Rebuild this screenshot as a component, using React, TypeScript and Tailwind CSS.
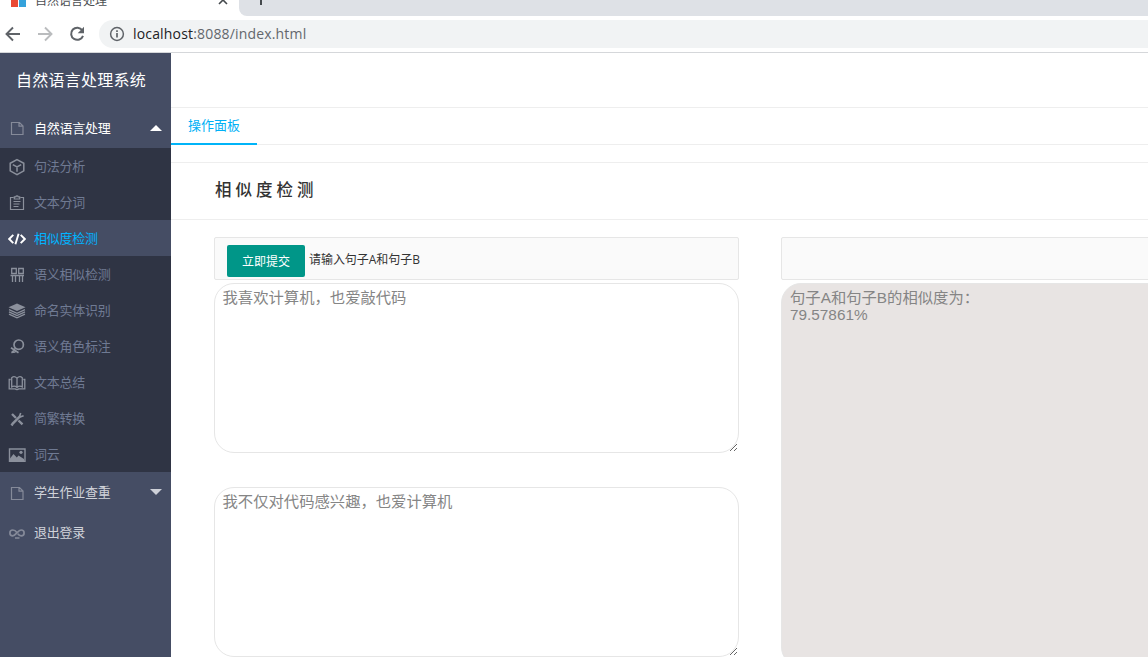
import type { ReactNode } from 'react'

type IconProps = { children: ReactNode; className?: string }

function Icon({ children, className = '' }: IconProps) {
  return (
    <svg
      viewBox="0 0 18 18"
      fill="none"
      stroke="currentColor"
      strokeWidth="1.3"
      className={`h-[18px] w-[18px] shrink-0 ${className}`}
    >
      {children}
    </svg>
  )
}

const fileIcon = (
  <path d="M3.500 3.500h8l3.500 3.500v8.500H3.500zM11 3.500v3.700h3.500" strokeWidth="1.2" />
)

const menuItems = [
  {
    label: '句法分析',
    icon: <path d="M9 1.600l6.800 3.700v7.600L9 16.600l-6.800-3.700V5.300zM4.800 6.600L9 9l4.200-2.400M9 9v4.800" strokeWidth="1.500" />,
  },
  {
    label: '文本分词',
    icon: (
      <g strokeWidth="1.2">
        <path d="M5.500 3.500h-3v12h13v-12h-3M6.300 5V2.800h1.500C8 1.500 10 1.500 10.200 2.800h1.500V5z" />
        <path d="M5.500 7.500h7M5.500 10h6M5.500 12.500h5" />
      </g>
    ),
  },
  {
    label: '相似度检测',
    active: true,
    icon: <path d="M5.300 4.800L1.200 9l4.100 4.200M12.700 4.800L16.800 9l-4.100 4.200M10.600 3.800L7.400 14.200" strokeWidth="1.900" />,
  },
  {
    label: '语义相似检测',
    icon: (
      <g strokeWidth="1.3">
        <path d="M3.700 2.500h4.600v5H3.700zM10.700 2.500h4.600v5h-4.600z" />
        <path d="M2.500 9.500h13.500M4.500 9.500V16M7.500 9.500V16M11.500 9.500V16M14.500 9.500V16" />
      </g>
    ),
  },
  {
    label: '命名实体识别',
    icon: (
      <>
        <path d="M9 1.500l8.500 3.700L9 8.900.5 5.200z" fill="currentColor" stroke="none" />
        <path d="M1 7.600l8 3.700 8-3.700M1 9.900l8 3.700 8-3.700M1 12.200l8 3.700 8-3.700" />
      </>
    ),
  },
  {
    label: '语义角色标注',
    icon: (
      <>
        <circle cx="10.700" cy="6.700" r="4.700" strokeWidth="1.700" />
        <path d="M7.500 10.200L4 14.500M3 9.700l3 2 4.500 3M3.300 14.300l4.200-.3" strokeWidth="1.700" />
      </>
    ),
  },
  {
    label: '文本总结',
    icon: (
      <path d="M9 4.300C7.300 2.400 5.200 2.400 3.700 3.700v9.200c2-1.200 3.800-.8 5.300.5 1.500-1.300 3.300-1.700 5.300-.5V3.700C12.800 2.400 10.700 2.400 9 4.300zM9 4.300v9M2.700 5.500H1.200v9.300h6.100c.7.900 2.700.9 3.400 0h6.100V5.500h-1.500" strokeWidth="1.300" />
    ),
  },
  {
    label: '简繁转换',
    icon: (
      <>
        <path d="M4 4l4 4M10.500 10.500l4 3.800" strokeWidth="2.400" />
        <path d="M4.200 14.200l8-8" strokeWidth="2.500" />
        <path d="M12.700 2.900l-1 2.900 1 1 2.900-1M3 14l2 1.500" strokeWidth="1.600" />
      </>
    ),
  },
  {
    label: '词云',
    icon: (
      <>
        <path d="M1.500 3h15.500v12.200H1.500z" strokeWidth="1.400" />
        <path d="M2 15v-2.500l3.500-4.500 3.300 3.500 1.700-2 5.500 3.500v2z" fill="currentColor" stroke="none" />
        <circle cx="13" cy="6.300" r="1.600" fill="currentColor" stroke="none" />
      </>
    ),
  },
]

function BrowserBar() {
  return (
    <header className="h-[53px] shrink-0 border-b border-[#d5d7da] bg-white">
      <div className="flex h-4 overflow-hidden">
        <div className="flex w-[239px] shrink-0 items-start">
          <div className="ml-[11px] flex h-[7px] shrink-0 gap-px">
            <span className="w-[7px] bg-[#ea4a35]" />
            <span className="w-[7px] bg-[#35a2db]" />
          </div>
          <span className="-mt-[9px] ml-[9px] whitespace-nowrap text-xs leading-[18px] text-[#4b4e52]">自然语言处理</span>
          <svg viewBox="0 0 10 10" className="-mt-[5px] ml-auto mr-[11px] h-[10px] w-[10px]" stroke="#45494d" strokeWidth="1.6">
            <path d="M1 1l8 8M9 1L1 9" />
          </svg>
        </div>
        <div className="flex-1 rounded-bl-lg bg-[#dee1e6]">
          <div className="ml-[21px] h-[5px] w-[2px] bg-[#45494d]" />
        </div>
      </div>
      <div className="flex h-9 items-center">
        <svg viewBox="0 0 16 16" className="ml-[5px] h-4 w-4" fill="none" stroke="#5f6368" strokeWidth="1.9">
          <path d="M15 8H2M8 1.500L1.500 8 8 14.500" />
        </svg>
        <svg viewBox="0 0 16 16" className="ml-4 h-4 w-4" fill="none" stroke="#babcbe" strokeWidth="1.9">
          <path d="M1 8h13M8 1.500L14.500 8 8 14.500" />
        </svg>
        <svg viewBox="0 0 16 16" className="ml-4 h-4 w-4" fill="none" stroke="#5f6368" strokeWidth="2">
          <path d="M13.300 4.300A6.100 6.100 0 1 0 14 9.800" />
          <path d="M15 .8v6.500H8.700z" fill="#5f6368" stroke="none" />
        </svg>
        <div className="ml-[14px] flex h-7 flex-1 items-center rounded-l-full bg-[#f1f3f4] pl-[10px]">
          <svg viewBox="0 0 16 16" className="h-4 w-4" fill="none" stroke="#5f6368" strokeWidth="1.5">
            <circle cx="8" cy="8" r="6.400" />
            <path d="M8 7v4.500M8 4.200v1.700" strokeWidth="1.700" />
          </svg>
          <span className="ml-2 font-['Open_Sans',sans-serif] text-[14px] leading-5 tracking-[0.17px] text-[#63676c]">
            <span className="text-[#202124]">localhost</span>:8088/index.html
          </span>
        </div>
      </div>
    </header>
  )
}

function Sidebar() {
  return (
    <aside className="flex w-[171px] shrink-0 flex-col bg-[#454d64] text-[13px] tracking-[-0.25px]">
      <h1 className="h-[55px] pl-4 text-[16px] leading-[53px] tracking-[0.25px] text-white">自然语言处理系统</h1>
      <div className="flex h-10 items-center pl-2 text-white">
        <Icon className="text-[#858a99]">{fileIcon}</Icon>
        <span className="-mt-px ml-2">自然语言处理</span>
        <span className="ml-auto mr-[9px] border-x-[6px] border-b-[6px] border-x-transparent border-b-white" />
      </div>
      <ul className="bg-[#2f3444]">
        {menuItems.map((item) => (
          <li
            key={item.label}
            className={`flex h-9 items-center pl-2 pt-[2px] ${item.active ? 'bg-[#454d64] text-[#00b4ff]' : 'text-[#6f7a93]'}`}
          >
            <Icon className={item.active ? 'text-white' : 'text-[#8b909c]'}>{item.icon}</Icon>
            <span className="-mt-[2px] ml-2">{item.label}</span>
          </li>
        ))}
      </ul>
      <div className="flex h-10 items-center pl-2 pt-[2px] text-[#d0d3da]">
        <Icon className="text-[#858a99]">{fileIcon}</Icon>
        <span className="-mt-[2px] ml-2">学生作业查重</span>
        <span className="mb-[3px] ml-auto mr-[9px] border-x-[6px] border-t-[6px] border-x-transparent border-t-[#cdd0d8]" />
      </div>
      <div className="flex h-10 items-center pl-2 pt-[2px] text-[#d0d3da]">
        <Icon className="text-[#858a99]">
          <path d="M9 8.800C7.500 6.500 6 6 4.800 6a2.900 2.900 0 0 0 0 5.800C7.500 11.800 10 6 13.200 6a2.900 2.900 0 0 1 0 5.800c-1.500 0-2.700-1-3.400-2M7 14h4.500" strokeWidth="1.700" />
        </Icon>
        <span className="-mt-[2px] ml-2">退出登录</span>
      </div>
    </aside>
  )
}

const fieldClass =
  "block rounded-[20px] border border-[#e6e6e6] py-[5px] font-['Liberation_Sans','Noto_Sans_CJK_SC',sans-serif] text-[15.33px] leading-[17px] text-[#858585] outline-none"

export default function App() {
  return (
    <div className="flex h-[657px] w-[1148px] flex-col overflow-hidden bg-white font-['Noto_Sans_CJK_SC',sans-serif]">
      <BrowserBar />
      <div className="flex min-h-0 flex-1">
        <Sidebar />
        <main className="min-w-0 flex-1">
          <div className="h-[55px] border-b border-[#eee]" />
          <nav className="flex h-[37px] border-b border-[#eee]">
            <span className="h-[37px] w-[86px] border-b-2 border-[#00b4f8] pl-[17px] text-[13px] leading-[33px] text-[#00b0f5]">
              操作面板
            </span>
          </nav>
          <div className="h-[18px] border-b border-[#eee]" />
          <h2 className="h-[57px] border-b border-[#eee] pl-11 text-[16.500px] font-medium leading-[53px] tracking-[4px] text-[#333]">
            相似度检测
          </h2>
          <div className="flex gap-[42px] pl-[43px] pt-[17px]">
            <section className="w-[525px] shrink-0">
              <div className="flex h-[43px] items-center rounded-[2px] border border-[#e6e6e6] bg-[#fafafa] pl-3 pt-[5px]">
                <button className="h-8 w-[78px] rounded-[2px] bg-[#009688] text-[12px] text-white">立即提交</button>
                <span className="-mt-[2px] ml-1 font-['Open_Sans','Noto_Sans_CJK_SC',sans-serif] text-[12px] tracking-[-0.05px] text-[#333]">
                  请输入句子A和句子B
                </span>
              </div>
              <textarea className={`${fieldClass} mt-[3px] h-[170px] w-full resize bg-white px-[7.500px]`} defaultValue="我喜欢计算机，也爱敲代码" />
              <textarea className={`${fieldClass} mt-[34px] h-[170px] w-full resize bg-white px-[7.500px]`} defaultValue="我不仅对代码感兴趣，也爱计算机" />
            </section>
            <section className="w-[525px] shrink-0">
              <div className="h-[43px] rounded-[2px] border border-[#e6e6e6] bg-[#fafafa]" />
              <textarea
                readOnly
                className={`${fieldClass} mt-[3px] h-[384px] w-full resize bg-[#e8e4e3] px-2`}
                defaultValue={'句子A和句子B的相似度为：\n79.57861%'}
              />
            </section>
          </div>
        </main>
      </div>
    </div>
  )
}
